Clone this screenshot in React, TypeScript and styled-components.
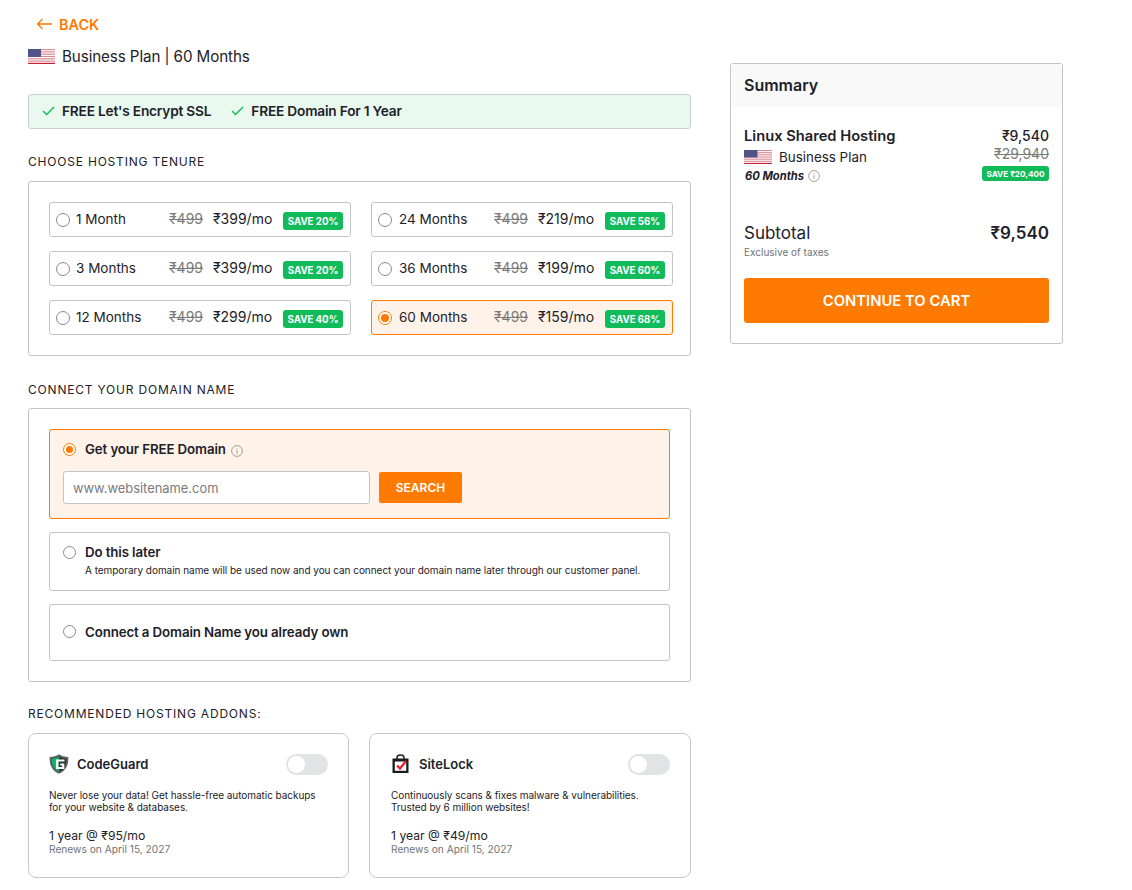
import React from 'react'
import styled, { createGlobalStyle } from 'styled-components'

const GlobalStyle = createGlobalStyle`
  html, body {
    margin: 0;
    padding: 0;
    background: #fff;
    color: #1d2129;
    font-family: Inter, "Liberation Sans", "DejaVu Sans", sans-serif;
  }
  * { box-sizing: border-box; }
`

const Page = styled.div`
  width: 1132px;
  height: 890px;
  overflow: hidden;
  display: flex;
  align-items: flex-start;
  padding: 16px 0 0 28px;
`

const Main = styled.div`
  width: 663px;
  flex: none;
`

const BackLink = styled.a`
  display: flex;
  align-items: center;
  gap: 6px;
  height: 18px;
  margin-left: 8px;
  padding-bottom: 2px;
  color: #ff7a00;
  font-size: 14.4px;
  font-weight: 600;
`

const PlanRow = styled.div`
  display: flex;
  align-items: center;
  gap: 7px;
  height: 20px;
  margin-top: 12px;
  font-size: 15.2px;
  letter-spacing: -0.1px;
`

const PerkBar = styled.div`
  display: flex;
  align-items: center;
  gap: 20px;
  height: 35px;
  margin-top: 28px;
  padding: 0 0 2px 13px;
  background: #e9f9f0;
  border: 1px solid #c9cfcc;
  border-radius: 3px;
  font-size: 13.7px;
  font-weight: 600;
  letter-spacing: -0.2px;
`

const Perk = styled.span`
  display: flex;
  align-items: center;
  gap: 7px;
`

const SectionTitle = styled.h2<{ $top: number; $bottom: number }>`
  margin: ${p => p.$top}px 0 ${p => p.$bottom}px;
  height: 16px;
  line-height: 16px;
  font-size: 12px;
  font-weight: 400;
  letter-spacing: 0.8px;
`

const Panel = styled.div`
  border: 1px solid #c4c4c4;
  border-radius: 3px;
`

const TenureGrid = styled(Panel)`
  display: grid;
  grid-template-columns: 302px 302px;
  column-gap: 20px;
  row-gap: 14px;
  padding: 20px 17px 20px 20px;
`

const TenureOption = styled.label<{ $active?: boolean }>`
  display: flex;
  align-items: center;
  height: 35px;
  padding: 0 6px;
  border: 1px solid ${p => (p.$active ? '#ff7a00' : '#c4c4c4')};
  border-radius: 3px;
  background: ${p => (p.$active ? '#fff3e9' : '#fff')};
  font-size: 14px;
`

const Radio = styled.span<{ $active?: boolean; $size: number }>`
  flex: none;
  position: relative;
  width: ${p => p.$size}px;
  height: ${p => p.$size}px;
  border-radius: 50%;
  border: 1px solid ${p => (p.$active ? '#ff7a00' : '#8a8a8a')};
  background: #fff;
  &::after {
    content: '';
    display: ${p => (p.$active ? 'block' : 'none')};
    position: absolute;
    inset: 2px;
    border-radius: 50%;
    background: #ff7a00;
  }
`

const TenureName = styled.span<{ $right?: boolean }>`
  margin: 0 0 2px ${p => (p.$right ? 7 : 6)}px;
  width: ${p => (p.$right ? 95 : 93)}px;
  flex: none;
  font-size: 13.5px;
`

const OldPrice = styled.s`
  width: 44px;
  flex: none;
  margin-bottom: 2px;
  color: #7b7b7b;
`

const MonthPrice = styled.span<{ $right?: boolean }>`
  width: ${p => (p.$right ? 67 : 70)}px;
  flex: none;
  margin-bottom: 2px;
`

const SaveBadge = styled.span<{ $small?: boolean }>`
  display: inline-flex;
  align-items: center;
  justify-content: center;
  flex: none;
  width: ${p => (p.$small ? '67px' : '60px')};
  height: ${p => (p.$small ? '15px' : '18px')};
  margin-top: ${p => (p.$small ? '0' : '3px')};
  border-radius: 3px;
  background: #12bb5a;
  color: #fff;
  font-size: ${p => (p.$small ? '8.2px' : '9.7px')};
  font-weight: 700;
  white-space: nowrap;
`

const DomainPanel = styled(Panel)`
  display: flex;
  flex-direction: column;
  gap: 13px;
  padding: 20px;
`

const DomainOption = styled.div<{ $active?: boolean; $height: number }>`
  height: ${p => p.$height}px;
  padding: 0 13px;
  border: 1px solid ${p => (p.$active ? '#ff7a00' : '#c4c4c4')};
  border-radius: 3px;
  background: ${p => (p.$active ? '#fff3e9' : '#fff')};
`

const DomainHead = styled.div<{ $fill?: boolean; $top?: number }>`
  display: flex;
  align-items: center;
  gap: 9px;
  height: ${p => (p.$fill ? '100%' : '18px')};
  margin-top: ${p => p.$top ?? 0}px;
  padding-bottom: ${p => (p.$fill ? '2px' : '0')};
  font-size: 13.3px;
  font-weight: 600;
  letter-spacing: -0.12px;
`

const InfoSlot = styled.span`
  display: inline-flex;
  margin: 3px 0 0 -4px;
`

const DomainNote = styled.p`
  margin: 2px 0 0 22px;
  font-size: 10px;
  line-height: 14px;
  letter-spacing: -0.04px;
  white-space: nowrap;
`

const SearchRow = styled.div`
  display: flex;
  align-items: center;
  gap: 9px;
  margin-top: 13px;
`

const DomainInput = styled.input`
  width: 307px;
  height: 33px;
  padding: 1px 9px 0;
  border: 1px solid #c4c4c4;
  border-radius: 3px;
  background: #fff;
  font-family: inherit;
  font-size: 12.9px;
  &::placeholder { color: #7b7b7b; opacity: 1; }
`

const SearchButton = styled.button`
  width: 83px;
  height: 31px;
  border: 0;
  border-radius: 2px;
  background: #ff7a00;
  color: #fff;
  font-family: inherit;
  font-size: 12px;
  font-weight: 600;
`

const AddonGrid = styled.div`
  display: grid;
  grid-template-columns: 321px 322px;
  column-gap: 20px;
`

const AddonCard = styled.div`
  height: 145px;
  padding: 18px 20px 0;
  border: 1px solid #c9c9c9;
  border-radius: 8px;
  &:nth-child(2) {
    padding-left: 21px;
  }
`

const AddonHead = styled.div`
  display: flex;
  align-items: center;
  height: 24px;
  gap: 8px;
  font-size: 13px;
  font-weight: 600;
`

const Toggle = styled.span`
  margin-left: auto;
  width: 42px;
  height: 21px;
  border-radius: 11px;
  background: #e2e3e5;
  padding: 2px;
  &::before {
    content: '';
    display: block;
    width: 17px;
    height: 17px;
    border-radius: 50%;
    background: #fff;
  }
`

const AddonText = styled.p`
  margin: 13px 0 0;
  font-size: 10px;
  line-height: 12px;
  letter-spacing: -0.05px;
`

const AddonPrice = styled.div`
  margin-top: 15px;
  font-size: 12.2px;
  line-height: 15px;
`

const AddonRenew = styled.div`
  font-size: 10.2px;
  line-height: 13px;
  color: #6f7478;
`

const Summary = styled.aside`
  width: 333px;
  flex: none;
  height: 281px;
  margin: 47px 0 0 39px;
  border: 1px solid #c4c4c4;
  border-radius: 3px;
`

const SummaryTitle = styled.h3`
  height: 43px;
  margin: 0;
  padding: 0 0 2px 13px;
  display: flex;
  align-items: center;
  background: #f9f9f9;
  font-size: 16px;
  font-weight: 600;
`

const SummaryBody = styled.div`
  padding: 20px 13px 0;
`

const SummaryItem = styled.div`
  display: flex;
  justify-content: space-between;
  height: 95px;
`

const ItemName = styled.div`
  font-size: 14.7px;
  font-weight: 600;
  line-height: 18px;
`

const ItemPlan = styled.div`
  display: flex;
  align-items: center;
  gap: 7px;
  height: 18px;
  margin-top: 3px;
  font-size: 13.4px;
`

const ItemTerm = styled.div`
  display: flex;
  align-items: center;
  gap: 4px;
  margin: 3px 0 0 1px;
  font-size: 11.2px;
  font-weight: 700;
  font-style: italic;
`

const ItemPrices = styled.div`
  display: flex;
  flex-direction: column;
  align-items: flex-end;
  font-size: 14px;
  line-height: 18px;
  font-weight: 500;
`

const ItemOld = styled.s`
  margin-bottom: 3px;
  color: #7b7b7b;
  font-weight: 400;
`

const SubtotalRow = styled.div`
  display: flex;
  justify-content: space-between;
  align-items: center;
  height: 22px;
  font-size: 17px;
`

const SubtotalPrice = styled.span`
  font-size: 17px;
  font-weight: 600;
`

const TaxNote = styled.div`
  margin-top: 1px;
  font-size: 10px;
  line-height: 14px;
  color: #6f7478;
`

const CartButton = styled.button`
  display: block;
  width: 100%;
  height: 45px;
  margin-top: 19px;
  border: 0;
  border-radius: 3px;
  background: #ff7a00;
  color: #fff;
  font-family: inherit;
  font-size: 14.8px;
  font-weight: 600;
`

const UsFlag = ({ width = 27, height = 15 }: { width?: number; height?: number }) => (
  <svg width={width} height={height} viewBox="0 0 27 15" preserveAspectRatio="none" style={{ flex: 'none' }}>
    <rect width="27" height="15" fill="#fff" />
    {[0, 2.3, 4.6, 6.9, 9.2, 11.5].map(y => (
      <rect key={y} y={y} width="27" height="1.2" fill="#d98b93" />
    ))}
    <rect y="13.800" width="27" height="1.200" fill="#c8213a" />
    <rect width="13" height="8" fill="#4f5488" />
  </svg>
)

const Check = () => (
  <svg width="13" height="10" viewBox="0 0 13 10" fill="none" stroke="#12bb5a" strokeWidth="1.4">
    <path d="M1 5l3.6 3.6L12 1" />
  </svg>
)

const Info = () => (
  <svg width="12" height="12" viewBox="0 0 12 12" fill="none" stroke="#8a8a8a" strokeWidth="0.8">
    <circle cx="6" cy="6" r="5.4" />
    <path d="M6 5.2v3.6M6 3.2v1" />
  </svg>
)

const CodeGuardLogo = () => (
  <svg width="20" height="20" viewBox="0 0 20 20" style={{ flex: 'none' }}>
    <path d="M10 .3c2.500 1.800 5.600 2.700 9.300 2.700.4 8-2.300 13.700-9.300 16.700C3 16.700.3 11 .7 3 4.400 3 7.500 2.100 10 .3z" fill="#5a6160" />
    <path d="M10 2.500c2 1.300 4.400 2 7.300 2.200.2 6.200-2 10.700-7.300 13.200-5.300-2.500-7.500-7-7.300-13.200C5.600 4.500 8 3.800 10 2.500z" fill="#2b3130" />
    <path d="M10 2.500C8 3.800 5.600 4.500 2.700 4.700c-.2 6.200 2 10.700 7.300 13.200z" fill="#17b26a" />
    <path d="M15.500 6.500H8.200v7.500h6v-3.500h-3" fill="none" stroke="#fff" strokeWidth="2.200" />
  </svg>
)

const SiteLockLogo = () => (
  <svg width="20" height="20" viewBox="0 0 20 20" style={{ flex: 'none' }}>
    <path d="M6 5.500V3.500a3.500 2.600 0 017 0v2" fill="none" stroke="#222" strokeWidth="1.500" />
    <rect x="1.500" y="4.500" width="16" height="14.500" fill="#1a1a1a" />
    <rect x="3.800" y="7.500" width="11.400" height="9.300" fill="#fff" />
    <path d="M6 11.500l3 3 6-7.500" fill="none" stroke="#e0202a" strokeWidth="2.300" />
  </svg>
)

const BackArrow = () => (
  <svg width="17" height="12" viewBox="0 0 17 12" fill="none" stroke="#ff7a00" strokeWidth="1.300">
    <path d="M16 6H1.500M6.500 1L1.500 6l5 5" />
  </svg>
)

const tenures = [
  { name: '1 Month', price: '₹399/mo', save: 'SAVE 20%' },
  { name: '24 Months', price: '₹219/mo', save: 'SAVE 56%', right: true },
  { name: '3 Months', price: '₹399/mo', save: 'SAVE 20%' },
  { name: '36 Months', price: '₹199/mo', save: 'SAVE 60%', right: true },
  { name: '12 Months', price: '₹299/mo', save: 'SAVE 40%' },
  { name: '60 Months', price: '₹159/mo', save: 'SAVE 68%', right: true, active: true }
]

const App = (): JSX.Element => (
  <Page>
    <GlobalStyle />
    <Main>
      <BackLink>
        <BackArrow />
        BACK
      </BackLink>
      <PlanRow>
        <UsFlag />
        Business Plan | 60 Months
      </PlanRow>
      <PerkBar>
        <Perk>
          <Check />
          FREE Let's Encrypt SSL
        </Perk>
        <Perk>
          <Check />
          FREE Domain For 1 Year
        </Perk>
      </PerkBar>

      <SectionTitle $top={25} $bottom={11}>CHOOSE HOSTING TENURE</SectionTitle>
      <TenureGrid>
        {tenures.map(t => (
          <TenureOption key={t.name} $active={t.active}>
            <Radio $active={t.active} $size={14} />
            <TenureName $right={t.right}>{t.name}</TenureName>
            <OldPrice>₹499</OldPrice>
            <MonthPrice $right={t.right}>{t.price}</MonthPrice>
            <SaveBadge>{t.save}</SaveBadge>
          </TenureOption>
        ))}
      </TenureGrid>

      <SectionTitle $top={26} $bottom={10}>CONNECT YOUR DOMAIN NAME</SectionTitle>
      <DomainPanel>
        <DomainOption $active $height={90}>
          <DomainHead $top={10}>
            <Radio $active $size={13} />
            Get your FREE Domain
            <InfoSlot>
              <Info />
            </InfoSlot>
          </DomainHead>
          <SearchRow>
            <DomainInput placeholder="www.websitename.com" />
            <SearchButton>SEARCH</SearchButton>
          </SearchRow>
        </DomainOption>
        <DomainOption $height={59}>
          <DomainHead $top={10}>
            <Radio $size={13} />
            Do this later
          </DomainHead>
          <DomainNote>
            A temporary domain name will be used now and you can connect your domain name later through our customer panel.
          </DomainNote>
        </DomainOption>
        <DomainOption $height={57}>
          <DomainHead $fill>
            <Radio $size={13} />
            Connect a Domain Name you already own
          </DomainHead>
        </DomainOption>
      </DomainPanel>

      <SectionTitle $top={24} $bottom={11}>RECOMMENDED HOSTING ADDONS:</SectionTitle>
      <AddonGrid>
        <AddonCard>
          <AddonHead>
            <CodeGuardLogo />
            CodeGuard
            <Toggle />
          </AddonHead>
          <AddonText>
            Never lose your data! Get hassle-free automatic backups
            <br />
            for your website &amp; databases.
          </AddonText>
          <AddonPrice>1 year @ ₹95/mo</AddonPrice>
          <AddonRenew>Renews on April 15, 2027</AddonRenew>
        </AddonCard>
        <AddonCard>
          <AddonHead>
            <SiteLockLogo />
            SiteLock
            <Toggle />
          </AddonHead>
          <AddonText>
            Continuously scans &amp; fixes malware &amp; vulnerabilities.
            <br />
            Trusted by 6 million websites!
          </AddonText>
          <AddonPrice>1 year @ ₹49/mo</AddonPrice>
          <AddonRenew>Renews on April 15, 2027</AddonRenew>
        </AddonCard>
      </AddonGrid>
    </Main>

    <Summary>
      <SummaryTitle>Summary</SummaryTitle>
      <SummaryBody>
        <SummaryItem>
          <div>
            <ItemName>Linux Shared Hosting</ItemName>
            <ItemPlan>
              <UsFlag width={28} height={14} />
              Business Plan
            </ItemPlan>
            <ItemTerm>
              60 Months
              <Info />
            </ItemTerm>
          </div>
          <ItemPrices>
            <span>₹9,540</span>
            <ItemOld>₹29,940</ItemOld>
            <SaveBadge $small>SAVE ₹20,400</SaveBadge>
          </ItemPrices>
        </SummaryItem>
        <SubtotalRow>
          <span>Subtotal</span>
          <SubtotalPrice>₹9,540</SubtotalPrice>
        </SubtotalRow>
        <TaxNote>Exclusive of taxes</TaxNote>
        <CartButton>CONTINUE TO CART</CartButton>
      </SummaryBody>
    </Summary>
  </Page>
)

export default App
